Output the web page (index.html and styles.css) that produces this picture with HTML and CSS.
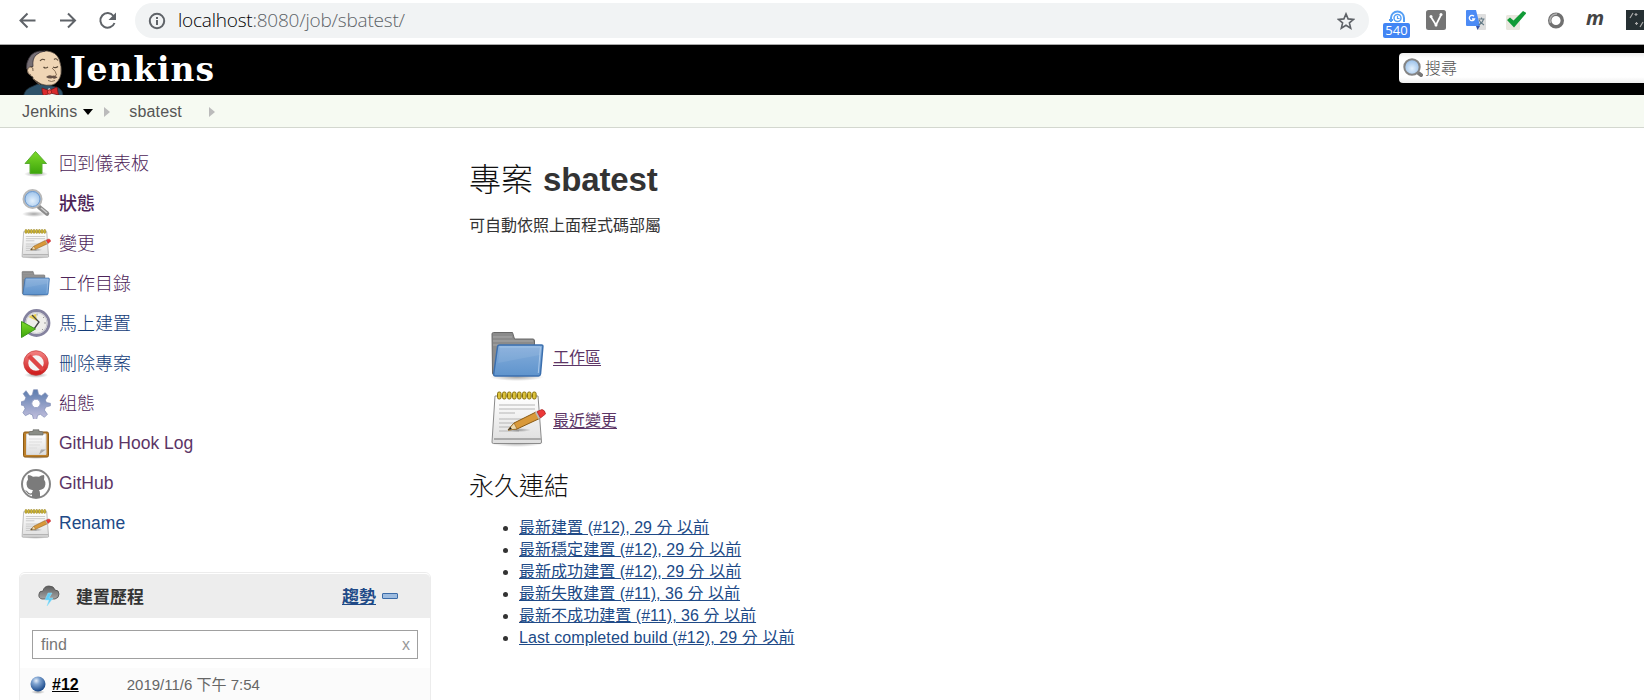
FILE: index.html
```html
<!DOCTYPE html>
<html lang="zh-Hant">
<head>
<meta charset="utf-8">
<title>sbatest [Jenkins]</title>
<link rel="stylesheet" href="styles.css">
</head>
<body>
<svg class="defs" width="0" height="0" aria-hidden="true">
  <defs>
    <linearGradient id="green" x1="0" y1="0" x2="0" y2="1"><stop offset="0" stop-color="#7edb2a"/><stop offset="1" stop-color="#3da50b"/></linearGradient>
    <linearGradient id="blue" x1="0" y1="0" x2="0" y2="1"><stop offset="0" stop-color="#86aedb"/><stop offset="1" stop-color="#5f94cd"/></linearGradient>
    <linearGradient id="paper" x1="0" y1="0" x2="0" y2="1"><stop offset="0" stop-color="#fff"/><stop offset="1" stop-color="#dedede"/></linearGradient>
    <linearGradient id="red" x1="0" y1="0" x2="0" y2="1"><stop offset="0" stop-color="#f07a7a"/><stop offset="1" stop-color="#d02020"/></linearGradient>
    <linearGradient id="steel" x1="0" y1="0" x2="0" y2="1"><stop offset="0" stop-color="#5b7cae"/><stop offset="1" stop-color="#c4c0de"/></linearGradient>
    <linearGradient id="cloud" x1="0" y1="0" x2="0" y2="1"><stop offset="0" stop-color="#5c5c5c"/><stop offset="1" stop-color="#a5a5a5"/></linearGradient>
    <radialGradient id="lens" cx=".5" cy=".6" r=".6"><stop offset="0" stop-color="#e4f1fd"/><stop offset="1" stop-color="#93bce8"/></radialGradient>
    <radialGradient id="ball" cx=".38" cy=".28" r=".7"><stop offset="0" stop-color="#e6effa"/><stop offset=".35" stop-color="#7fa3d0"/><stop offset="1" stop-color="#1c4b8c"/></radialGradient>
    <radialGradient id="shade"><stop offset="0" stop-color="#000" stop-opacity=".35"/><stop offset="1" stop-color="#000" stop-opacity="0"/></radialGradient>
    <symbol id="i-up" viewBox="0 0 30 30"><ellipse cx="15" cy="25" rx="12" ry="3" fill="url(#shade)"/><path d="M14.500 2.500 25.500 14.500h-4.500V24.500H9V14.500H4z" fill="url(#green)" stroke="#5aac33"/></symbol>
    <symbol id="i-search" viewBox="0 0 30 30"><ellipse cx="13" cy="25" rx="12" ry="3" fill="url(#shade)"/><path d="m18 18 8 6.500" stroke="#8c8c8c" stroke-width="4.500" stroke-linecap="round"/><path d="m20 19 6 5" stroke="#ccc" stroke-width="1.500"/><circle cx="11.500" cy="10" r="9" fill="url(#lens)" stroke="#b8b8b8" stroke-width="2"/><circle cx="11.500" cy="10" r="7.500" fill="none" stroke="#6c98cc"/></symbol>
    <symbol id="i-searchbox" viewBox="0 0 20 20"><path d="m14 14 4 3" stroke="#777" stroke-width="4" stroke-linecap="round"/><circle cx="9" cy="9" r="7.700" fill="url(#lens)" stroke="#858585" stroke-width="2"/></symbol>
    <symbol id="i-note" viewBox="0 0 56 56"><ellipse cx="27" cy="52" rx="27" ry="4" fill="url(#shade)"/><path d="M5 5h43l3.500 46q0 1.500-1.500 1.500H3.500Q2 52.500 2 51z" fill="url(#paper)" stroke="#8b8b8b"/><path d="M4 48h47" stroke="#aaa" stroke-width="2"/><g stroke="#b5b5b5" stroke-width="1.200"><path d="M9 14h36M9 18h36M9 22h16M9 28h32M9 32h26M9 36h18M9 40h20"/></g><g fill="#dcc33a" stroke="#87700e"><rect x="7.500" y="1" width="3.600" height="7" rx="1.600"/><rect x="12.500" y="1" width="3.600" height="7" rx="1.600"/><rect x="17.500" y="1" width="3.600" height="7" rx="1.600"/><rect x="22.500" y="1" width="3.600" height="7" rx="1.600"/><rect x="27.500" y="1" width="3.600" height="7" rx="1.600"/><rect x="32.500" y="1" width="3.600" height="7" rx="1.600"/><rect x="37.500" y="1" width="3.600" height="7" rx="1.600"/><rect x="42.500" y="1" width="3.600" height="7" rx="1.600"/></g><ellipse cx="29" cy="39" rx="12" ry="2" fill="url(#shade)"/><path d="m18 39 6-7 22-11 3.500 6.500L27 38z" fill="#d9993a" stroke="#8a5a14"/><path d="m18 39 6-7 3 6z" fill="#edd9ad" stroke="#8a5a14" stroke-width=".6"/><path d="m18 39 2.500-3 1.300 2z" fill="#222"/><path d="m45 21.500 3.500 6.500 2-1-3.500-6.500z" fill="#bbb"/><path d="m47 20.500 5-2q3 .5 3.500 4.500l-5 4z" fill="#ec3838" stroke="#a72020" stroke-width=".7"/></symbol>
    <symbol id="i-folder" viewBox="0 0 56 50"><ellipse cx="27" cy="46" rx="27" ry="4" fill="url(#shade)"/><path d="M2 3q0-1.500 1.500-1.500h19L24.500 8H43q1.500 0 1.500 2v34H4.500q-2 0-2-2z" fill="#8b8b8b" stroke="#686868"/><path d="M3 6h19M3 10h40M3 14h40" stroke="#aaa" stroke-width="1"/><path d="M9.500 14h42q1.500 0 1.400 1.500L50.500 43q-.3 2-2 2H5.500q-2 0-1.800-2L7.500 16q.2-2 2-2z" fill="url(#blue)" stroke="#3b6fae" stroke-width="1.500"/><path d="M9.500 16h41l-2.200 26" fill="none" stroke="#a9c8ea"/><path d="m8 32 42-8 0-7H10z" fill="#fff" opacity=".08"/></symbol>
    <symbol id="i-build" viewBox="0 0 30 30"><circle cx="15.500" cy="14" r="12.500" fill="#eeeeea" stroke="#85839f" stroke-width="2.800"/><circle cx="15.500" cy="14" r="10.500" fill="none" stroke="#c8c8d0"/><path d="M15 5q-5 1-7.500 3l8.500 4z" fill="#e9ce53"/><path d="m11 6 7 7-5 7" fill="none" stroke="#444" stroke-width="1.300"/><path d="M16 4.500v2M23 8l-1 1M25 14h-2M22 21l-1-1" stroke="#999"/><path d="M.5 12.500 14.500 20 .5 28.500z" fill="url(#green)" stroke="#3c9618"/></symbol>
    <symbol id="i-delete" viewBox="0 0 30 30"><ellipse cx="15" cy="26" rx="12" ry="3" fill="url(#shade)"/><circle cx="15" cy="14" r="10" fill="#f4f4f4" stroke="url(#red)" stroke-width="4.500"/><path d="m8 7 14 14" stroke="#de4545" stroke-width="4.500"/><circle cx="15" cy="14" r="12.300" fill="none" stroke="#c43838" stroke-width=".7"/></symbol>
    <symbol id="i-gear" viewBox="0 0 30 30"><path d="m12.500.8 4-.1 1 4.800 3 1.200 3.700-3 2.800 3-2.600 4.400 1 2.500 4 .7v2.500l-4.700 1.300-1.300 3 3 4.200-3 3-4-3-2.800 1-1 4.200h-3l-1.200-4.600-3-1.200-4 2-2.500-3 2.200-4-1.200-3-3.700-1v-2.500l4.400-1.500 1.300-3-2.700-4 2.800-3L9 7.200l2.400-1.500z" fill="url(#steel)" stroke="#7f8cb5" stroke-width=".7"/><circle cx="15" cy="14.500" r="4.200" fill="#fff" stroke="#9aa5c8"/></symbol>
    <symbol id="i-clip" viewBox="0 0 30 30"><ellipse cx="15" cy="28" rx="13" ry="2" fill="url(#shade)"/><rect x="2.500" y="3" width="25" height="25" rx="1.500" fill="#bd802a" stroke="#8b5b17"/><path d="M5.500 5h19.500v20.500h-19.500z" fill="url(#paper)" stroke="#d8d8d8"/><path d="M8 10h13M8 13h13M8 16h11M8 19h8" stroke="#ddd"/><path d="m18 25.500 2-5h5z" fill="#aaa"/><path d="M8 6V3.500q0-1 2-1h2V.8h6v1.700h2q2 0 2 1V6z" fill="#8a8d86" stroke="#6b6d68" stroke-width=".7"/></symbol>
    <symbol id="i-github" viewBox="0 0 30 30"><circle cx="15" cy="15" r="14" fill="#fff" stroke="#858585" stroke-width="2"/><path d="M7 6q3 0 5 1.800 3-.8 6 0Q20 6 23 6q.8 2.500 0 4.500 1.700 2 1.400 5-.5 5-6.400 5.700 1 1 1 3v4l-2 .8h-4l-2-.8v-2.700q-4 .8-5.300-2.200-.7-1-2-1.700 2-.4 3 1.200 1.500 2.400 4.300 1.300.1-1.800 1-2.900-5.900-.7-6.400-5.700-.3-3 1.400-5Q6.200 8.500 7 6z" fill="#7b7b7b"/></symbol>
  </defs>
</svg>

<header class="browser">
  <svg class="nav" width="120" height="40" viewBox="0 0 120 40" fill="none" stroke="#5f6368" stroke-width="2"><path d="M35.500 20.500H21M27.500 13.500l-7 7 7 7M60 20.500h14.500M68 13.500l7 7-7 7"/><path d="M113.500 16A7.300 7.300 0 1 0 114.500 23"/><path d="M116 12.500v7.500h-7.500z" fill="#5f6368" stroke="none"/></svg>
  <div class="address">
    <svg width="18" height="18" viewBox="0 0 18 18" fill="none" stroke="#5f6368" stroke-width="2"><circle cx="9" cy="9" r="7.200"/><path d="M9 8v5M9 5v2"/></svg>
    <span class="url"><b>localhost</b>:8080/job/sbatest/</span>
    <svg class="star" width="18" height="18" viewBox="0 0 18 18" fill="none" stroke="#5f6368" stroke-width="1.600"><path d="m9 1.900 2.100 5 5.400.5-4.100 3.500 1.300 5.300L9 13.300l-4.700 2.900 1.300-5.300-4.100-3.500 5.400-.5z"/></svg>
  </div>
  <div class="extensions">
    <div class="ext-counter">
      <svg width="18" height="14" viewBox="0 0 18 14" fill="none" stroke="#559ff5" stroke-width="2"><path d="M3 12V8a6.500 6.500 0 0 1 13 0v4M1 10h4"/><circle cx="9.500" cy="8" r="3.500" stroke-width="1.500"/><path d="M9.500 6v2.500h2" stroke-width="1.200"/></svg>
      <span class="count">540</span>
    </div>
    <svg class="ext" width="20" height="20" viewBox="0 0 20 20"><rect width="20" height="20" rx="2.500" fill="#757575"/><path d="m5 7 5 8 5-10" fill="none" stroke="#fff" stroke-width="1.700"/><circle cx="5" cy="6.500" r="1.500" fill="#fff"/><circle cx="10" cy="15" r="1.500" fill="#fff"/><circle cx="15" cy="4.500" r="1.500" fill="#fff"/></svg>
    <svg class="ext" width="20" height="20" viewBox="0 0 20 20"><path d="M8 4h11q1 0 1 1v14q0 1-1 1h-7z" fill="#dedede"/><path d="M0 1q0-1 1-1h9l4 16H1q-1 0-1-1z" fill="#4c8bf5"/><path d="M10 16h4l-2.500 4z" fill="#3353a8"/><path d="M8 6.200A2.700 2.700 0 1 0 8.500 9H6" fill="none" stroke="#fff" stroke-width="1.300"/><path d="M12.500 9h6M15.500 7.500V9m2 0q-1 4-5 6m.5-5q1.500 3 5 5" fill="none" stroke="#657b87" stroke-width="1.100"/></svg>
    <svg class="ext" width="20" height="20" viewBox="0 0 20 20"><rect x="0" y="5" width="14" height="15" rx="1.500" fill="#e9e7df"/><path d="m1 10 3-2.500 3.500 3L17 1l3.500 2L8 17.500z" fill="#119b37"/></svg>
    <svg class="ext" width="20" height="20" viewBox="0 0 20 20"><circle cx="10" cy="10.500" r="6.300" fill="#fff" stroke="#707070" stroke-width="3.400"/><path d="M4.500 13A6.500 6.500 0 0 1 11 4" fill="none" stroke="#b0b0b0" stroke-width="1.500"/></svg>
    <span class="ext ext-m">m</span>
    <svg class="ext" width="20" height="20" viewBox="0 0 20 20"><path d="M0 0h20v20H0z" fill="#263033"/><path d="m4 8 3-5M10 3v3M8.500 4.500h3M10.500 12v3M9 13.500h3M14 17l3-5" stroke="#aaa" stroke-width="1.200"/></svg>
  </div>
</header>

<div class="banner">
  <div class="brand">
    <svg width="42" height="46" viewBox="0 0 42 46">
      <path d="M.5 46Q2 39.500 7 37.500L15 34l14 2 7 2q4 3 4 8z" fill="#2f5269" stroke="#1c2e3b" stroke-width=".8"/>
      <path d="M10 27Q5 25 4.500 20 4 10 10 5 16 .8 24 1q9 1 12 8 3 8 2 15-2 9-9 11-6 1-11-1L10 29z" fill="#efd5b5" stroke="#5d5045" stroke-width=".8"/>
      <path d="M22 1Q10 0 6 8q-3 5-2.500 11l3 .5 1-3h2.500Q9 9 13 5q4-3.500 9-4z" fill="#756e74" stroke="#353036" stroke-width=".8"/>
      <path d="M8 25q-3.500-.5-3.500-4.500.5-4 3.500-3.500 2.500 0 2 4" fill="#efd5b5" stroke="#6a5745" stroke-width=".9"/>
      <path d="M17 11q2-3 5-1M31 9.500q2-2 4 1M20.500 17q2 2 4.500 0M30 17q2.500 1.500 5-.5" fill="none" stroke="#584736" stroke-width="1.100"/>
      <path d="M29 18q4 3 4.500 7-2 2-4 1" fill="none" stroke="#8c735a"/>
      <path d="M23 27q3-3 6.500-1 3-1 5 1.500-3 2-5 .5-3 1.500-6.500-1z" fill="#665247"/>
      <path d="M25 30.500q3.500 2 7 0M11 29q2 4 6 5.500" fill="none" stroke="#806650" stroke-width=".9"/>
      <path d="m20 46 6-8 10 8z" fill="#e8edf0"/><path d="m19 38 7 2.500 8-3.500 1.500 8-8-2-7 3q-2-4-1.500-8z" fill="#d92a2c" stroke="#701818" stroke-width=".8"/><circle cx="26.500" cy="42" r="2.200" fill="#f04a45" stroke="#8c1717" stroke-width=".8"/>
    </svg>
    <span class="brand-name">Jenkins</span>
  </div>
  <div class="search"><svg width="20" height="20"><use href="#i-searchbox"/></svg><span>搜尋</span></div>
</div>

<nav class="crumbs">
  <span>Jenkins</span><i class="caret"></i><i class="sep"></i><span class="crumb-job">sbatest</span><i class="sep sep-last"></i>
</nav>

<div class="page">
  <aside class="side">
    <a class="task"><svg><use href="#i-up"/></svg><span>回到儀表板</span></a>
    <a class="task current"><svg><use href="#i-search"/></svg><span>狀態</span></a>
    <a class="task"><svg><use href="#i-note"/></svg><span>變更</span></a>
    <a class="task"><svg><use href="#i-folder"/></svg><span>工作目錄</span></a>
    <a class="task fresh"><svg><use href="#i-build"/></svg><span>馬上建置</span></a>
    <a class="task fresh"><svg><use href="#i-delete"/></svg><span>刪除專案</span></a>
    <a class="task"><svg><use href="#i-gear"/></svg><span>組態</span></a>
    <a class="task latin"><svg><use href="#i-clip"/></svg><span>GitHub Hook Log</span></a>
    <a class="task latin"><svg><use href="#i-github"/></svg><span>GitHub</span></a>
    <a class="task latin fresh"><svg><use href="#i-note"/></svg><span>Rename</span></a>

    <section class="history">
      <div class="history-head">
        <svg width="22" height="22" viewBox="0 0 22 22"><path d="M4 14q-4-1-3-5 0-3 4-3 1-5 6-5 5 0 6 4 4 0 4 4t-4 5z" fill="url(#cloud)" stroke="#505050" stroke-width=".8"/><path d="m10 8-3 7h4l-2 6 6-8h-4l3-5z" fill="#62cdf5" stroke="#9be3fa" stroke-width=".5"/></svg>
        <b>建置歷程</b><a class="trend">趨勢</a><i class="minus"></i>
      </div>
      <div class="find"><span>find</span><span class="clear">x</span></div>
      <div class="build">
        <svg width="16" height="18" viewBox="0 0 16 18"><ellipse cx="8" cy="16" rx="7" ry="2" fill="url(#shade)"/><circle cx="8" cy="8" r="7.500" fill="url(#ball)"/></svg>
        <a>#12</a><time>2019/11/6 下午 7:54</time>
      </div>
    </section>
  </aside>

  <main class="main">
    <h1><span>專案</span> sbatest</h1>
    <p class="desc">可自動依照上面程式碼部屬</p>
    <div class="shortcut workspace"><svg width="56" height="50"><use href="#i-folder"/></svg><a>工作區</a></div>
    <div class="shortcut changes"><svg width="56" height="56"><use href="#i-note"/></svg><a>最近變更</a></div>
    <h2>永久連結</h2>
    <ul class="links">
      <li><a>最新建置 (#12), 29 分 以前</a></li>
      <li><a>最新穩定建置 (#12), 29 分 以前</a></li>
      <li><a>最新成功建置 (#12), 29 分 以前</a></li>
      <li><a>最新失敗建置 (#11), 36 分 以前</a></li>
      <li><a>最新不成功建置 (#11), 36 分 以前</a></li>
      <li><a class="completed">Last completed build (#12), 29 分 以前</a></li>
    </ul>
  </main>
</div>
</body>
</html>
```
FILE: styles.css
```css
* { box-sizing: border-box; }
html, body { height: 700px; overflow: hidden; }
body { margin: 0; background: #fff; color: #333; font: 16px/22px "Liberation Sans", "Noto Sans CJK TC", sans-serif; }
.defs { position: absolute; }
svg { display: block; flex: none; }

.browser { display: flex; height: 45px; padding-top: 3px; border-bottom: 1px solid #a9a9a9; overflow: hidden; }
.nav { margin-top: -3px; width: 120px; }
.address { display: flex; align-items: center; flex: none; width: 1234px; height: 35px; margin-left: 15px; padding: 0 14px 0 13px; border-radius: 18px; background: #f1f3f4; }
.url { margin: -2px 0 0 12px; font: 300 19px/24px "Open Sans", sans-serif; color: #5d6368; letter-spacing: -.22px; white-space: nowrap; }
.url b { font-weight: 300; color: #000; }
.star { margin-left: auto; }
.extensions { display: flex; flex: none; width: 275px; padding-top: 7px; margin-left: 14px; }
.ext-counter { flex: none; width: 27px; margin-right: 16px; }
.ext-counter svg { margin: 0 auto; }
.count { display: block; position: relative; margin-top: -1px; height: 15px; border-radius: 2px; background: #4285f4; color: #fff; font: 13px/15px "Open Sans", sans-serif; text-align: center; }
.ext { flex: none; width: 20px; margin-right: 20px; }
.ext-m { font: italic bold 20px/18px "Open Sans", sans-serif; color: #444; margin-top: -1px; }

.banner { display: flex; justify-content: space-between; height: 50px; background: #000; overflow: hidden; }
.brand { display: flex; padding: 5px 0 0 23px; }
.brand-name { margin-left: 5px; font: bold 33px/40px "DejaVu Serif", serif; letter-spacing: .9px; color: #fff; }
.search { display: flex; width: 245px; height: 30px; margin-top: 8px; padding: 5px 4px; border-radius: 4px 0 0 4px; background: linear-gradient(#eee, #fff 5px, #fff 24px, #eee); color: #555; font-weight: 300; line-height: 22px; }
.search span { margin-left: 2px; }

.crumbs { display: flex; align-items: center; height: 33px; padding: 1px 0 0 22px; border-bottom: 1px solid #d3d7cf; background: #f6faf2; color: #555; letter-spacing: .15px; }
.caret { margin-left: 6px; border: 5px solid transparent; border-top: 6px solid #000; border-bottom: 0; }
.sep { margin-left: 11px; border: 5px solid transparent; border-left: 6px solid #bbb; border-right: 0; }
.crumb-job { margin-left: 19px; }
.sep-last { margin-left: 27px; }

.page { display: flex; }
.side { width: 469px; padding: 15px 0 0 21px; }
.task { display: flex; align-items: center; height: 40px; color: #4d2458; font-size: 18px; font-weight: 300; }
.task svg { width: 30px; height: 30px; margin-top: 2px; }
.task span { margin: 2px 0 0 8px; line-height: 28px; }
.current { font-weight: 500; }
.latin { color: #5c3566; font-weight: 400; font-size: 17.500px; }
.latin span { margin-top: 0; }
.fresh { color: #123b78; }
.latin.fresh { color: #204a87; }

.history { width: 412px; height: 140px; margin: 29px 0 0 -2px; border: 1px solid #ececec; border-radius: 6px 6px 0 0; }
.history-head { display: flex; align-items: center; height: 45px; padding: 0 32px 0 18px; border-radius: 5px 5px 0 0; border-top: 1px solid #fff; background: #ededed; font-size: 17px; }
.history-head b { margin: 3px 0 0 16px; }
.trend { margin: 3px 0 0 auto; color: #204a87; font-weight: 700; text-decoration: underline; text-underline-offset: 1px; }
.minus { width: 16px; height: 6px; margin-left: 6px; border: 1px solid #3c6ca8; border-radius: 1px; background: #9dbce0; }
.find { display: flex; justify-content: space-between; height: 29px; margin: 12px 12px 9px; padding: 0 7px 0 8px; border: 1px solid #a0a0a0; background: #fff; color: #777; line-height: 27px; }
.clear { color: #999; }
.build { display: flex; align-items: center; height: 40px; padding: 0 10px 7px; background: #fbfbfb; }
.build a { margin-left: 6px; color: #000; font-weight: 700; text-decoration: underline; }
.build time { margin-left: 48px; color: #666; font-size: 15px; }

.main { flex: 1; }
h1 { margin: 27px 0 0; font: bold 33px/44px "Liberation Sans", sans-serif; letter-spacing: -.1px; }
h1 span { margin-right: 1px; color: #111; font: 300 32px/44px "Noto Sans CJK TC", sans-serif; }
.desc { margin: 12px 0 0; line-height: 24px; }
.shortcut { display: flex; align-items: center; padding-left: 21px; color: #5c3566; }
.shortcut a { margin: 3px 0 0 7px; text-decoration: underline; text-underline-offset: 2px; }
.workspace { margin-top: 93px; }
.changes { margin-top: 10px; }
h2 { margin: 21px 0 0; color: #111; font: 300 25px/32px "Noto Sans CJK TC", sans-serif; }
.links { margin: 17px 0 0; padding-left: 50px; }
.links li { height: 22px; line-height: 22px; }
.links a { color: #204a87; text-decoration: underline; letter-spacing: .04px; }
.links .completed { letter-spacing: .1px; }
```
